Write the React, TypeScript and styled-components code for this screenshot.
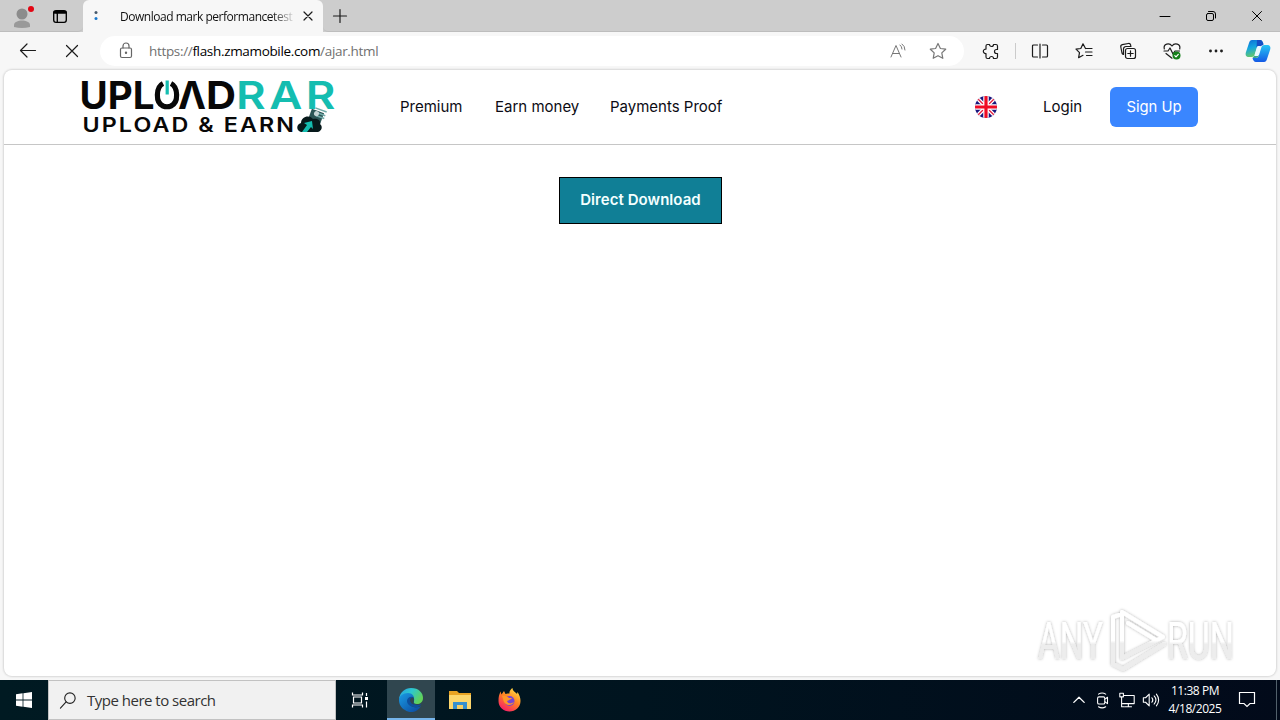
import React from 'react'
import styled, { createGlobalStyle } from 'styled-components'

const Colors = {
  titleBar: '#cdcdcd',
  toolbar: '#f7f7f7',
  teal: '#14bdb0',
  ink: '#080808',
  blue: '#3a86ff',
  download: '#107f96',
  taskbar: '#00141f',
}

const uiFont = `'Open Sans', 'Noto Sans', sans-serif`
const siteFont = `Inter, 'Liberation Sans', sans-serif`

const GlobalStyle = createGlobalStyle`
  * {
    box-sizing: border-box;
  }
  body {
    margin: 0;
    overflow: hidden;
    font-family: ${uiFont};
  }
  svg {
    display: block;
    flex-shrink: 0;
    overflow: visible;
  }
`

const Screen = styled.div`
  display: flex;
  flex-direction: column;
  width: 1280px;
  height: 720px;
  background-color: ${Colors.toolbar};
`

const Slot = styled.div<{ $width: number }>`
  display: flex;
  flex: none;
  align-items: center;
  justify-content: center;
  width: ${({ $width }) => $width}px;
`

const Spacer = styled.div`
  flex: 1;
`

/* browser */

const TitleBar = styled.header`
  display: flex;
  height: 32px;
  background-color: ${Colors.titleBar};
`

const TitleTools = styled.div`
  display: flex;
  width: 83px;
  height: 32px;
  border-bottom: 1px solid #bdbdbd;
  border-bottom-right-radius: 5px;
`

const Tab = styled.div`
  display: flex;
  align-items: center;
  width: 240px;
  padding-left: 10px;
  border-radius: 6px 6px 0 0;
  background-color: ${Colors.toolbar};
`

const TabTitle = styled.span`
  width: 176px;
  margin-left: 21px;
  overflow: hidden;
  white-space: nowrap;
  font-size: 12px;
  letter-spacing: -0.47px;
  color: #111;
  mask-image: linear-gradient(90deg, #000 152px, transparent 176px);
`

const WindowBar = styled.div`
  display: flex;
  flex: 1;
  border-bottom: 1px solid #bdbdbd;
  border-bottom-left-radius: 5px;
`

const Toolbar = styled.div`
  display: flex;
  align-items: center;
  height: 38px;
  padding-left: 6px;
`

const AddressBar = styled.div`
  display: flex;
  align-items: center;
  width: 864px;
  height: 30px;
  margin: 0 5px 0 6px;
  padding: 0 6px 0 16px;
  border-radius: 15px;
  background-color: #fff;
`

const Url = styled.span`
  flex: 1;
  margin-left: 13px;
  font-size: 13.5px;
  letter-spacing: -0.33px;
  color: #707070;

  b {
    font-weight: 400;
    color: #000;
  }
`

const Divider = styled.div`
  width: 1px;
  height: 16px;
  margin: 0 2px;
  background-color: #cbcbcb;
`

const Page = styled.main`
  display: flex;
  flex-direction: column;
  width: 1272px;
  height: 606px;
  margin: 0 4px 4px;
  border-radius: 8px;
  overflow: hidden;
  background-color: #fff;
  box-shadow: 0 0 2px 1px rgba(0, 0, 0, 0.13);
`

/* site */

const SiteHeader = styled.div`
  display: flex;
  flex: none;
  align-items: center;
  height: 75px;
  padding: 0 78px;
  border-bottom: 1px solid #c6c6c6;
`

const SiteNav = styled.nav`
  display: flex;
  gap: 32px;
  margin-left: 62px;
`

const NavLink = styled.a<{ $width: number }>`
  width: ${({ $width }) => $width}px;
  white-space: nowrap;
  font-family: ${siteFont};
  font-size: 15px;
  line-height: 24px;
  color: #0c0c14;
`

const SignUp = styled.button`
  width: 88px;
  height: 40px;
  margin-left: 28px;
  padding: 0 0 1px;
  border: none;
  border-radius: 6px;
  background-color: ${Colors.blue};
  font-family: ${siteFont};
  font-size: 14.8px;
  color: #fff;
`

const PageBody = styled.div`
  display: flex;
  flex: 1;
  flex-direction: column;
  align-items: center;
  padding: 32px 39px 2px 0;
`

const DownloadButton = styled.button`
  width: 163px;
  height: 47px;
  margin-left: 40px;
  padding: 0 0 2px;
  border: 1px solid #000;
  background-color: ${Colors.download};
  font-family: ${siteFont};
  font-size: 15px;
  font-weight: 600;
  letter-spacing: 0.05px;
  color: #f4ffff;
`

const Watermark = styled.div`
  align-self: flex-end;
  margin-top: auto;
`

/* taskbar */

const Taskbar = styled.footer`
  display: flex;
  height: 40px;
  background-color: ${Colors.taskbar};
  background-image: linear-gradient(90deg, #001a22, #00141f 50%, #020a1a);
`

const SearchBox = styled.div`
  display: flex;
  align-items: center;
  width: 288px;
  border: 1px solid #c2c2c2;
  padding-left: 10px;
  background-color: #f1f1f1;
  font-size: 15px;
  letter-spacing: -0.5px;
  color: #333;

  span {
    margin-left: 9px;
  }
`

const TaskButton = styled.div<{ $active?: boolean }>`
  display: flex;
  align-items: center;
  justify-content: center;
  width: 48px;
  height: 40px;
  margin-right: 1px;
  background-color: ${({ $active }) => ($active ? '#30464f' : 'transparent')};
  box-shadow: ${({ $active }) => ($active ? 'inset 0 -2px 0 #76b5eb' : 'none')};
`

const Clock = styled.div`
  width: 64px;
  padding-top: 2px;
  text-align: center;
  font-size: 12px;
  line-height: 18px;
  letter-spacing: -0.45px;
  color: #fff;
`

const ShowDesktop = styled.div`
  width: 4px;
  border-left: 1px solid #52606b;
`

type IconProps = {
  size?: number
  color?: string
  stroke?: number
  children: React.ReactNode
}

const Icon = ({ size = 20, color = '#1b1b1b', stroke = 1.2, children }: IconProps) => (
  <svg
    width={size}
    height={size}
    viewBox="0 0 20 20"
    fill="none"
    stroke={color}
    strokeWidth={stroke}
    strokeLinecap="round"
    strokeLinejoin="round"
  >
    {children}
  </svg>
)

const Logo = () => (
  <svg width="256" height="58" viewBox="82 79 256 58" fontFamily="Inter, 'Liberation Sans', sans-serif">
    <g fontSize="38.5" fontWeight="700" fill={Colors.ink}>
      <text x="79.500" y="110" textLength="75" lengthAdjust="spacingAndGlyphs">
        UPL
      </text>
      <text x="178" y="110" textLength="28" lengthAdjust="spacingAndGlyphs">
        Λ
      </text>
      <text x="206" y="110" textLength="30" lengthAdjust="spacingAndGlyphs">
        D
      </text>
      <text
        x="236"
        y="110"
        fontWeight="600"
        letterSpacing="3"
        textLength="103"
        lengthAdjust="spacingAndGlyphs"
        fill={Colors.teal}
      >
        RAR
      </text>
    </g>
    <path
      d="M163 84.500c-7 3.500-8 19 0 22.500q4 1.500 8 0c8-3.500 7-19 0-22.500"
      fill="none"
      stroke={Colors.ink}
      strokeWidth="5.200"
    />
    <path d="M167.200 81.500v14" stroke={Colors.teal} strokeWidth="3.200" />
    <text
      x="82.500"
      y="132.700"
      fontSize="20"
      fontWeight="600"
      fill={Colors.ink}
      letterSpacing="1.800"
      textLength="213.500"
      lengthAdjust="spacingAndGlyphs"
    >
      UPLOAD &amp; EARN
    </text>
    <g transform="rotate(20 317 119)">
      <path d="M309 112h13v13h-13z" fill="#2b5555" />
      <path d="M312 110h12M314 114h10M315 117h9" stroke="#71aaa8" strokeWidth="1.500" />
      <circle cx="315" cy="115" r="2.500" fill="#c5d5d5" />
    </g>
    <path
      d="M301 133c-5-1-5-8 0-9 0-6 8-9 12-4 5-1 8 2 7 5 3 2 2 7-2 8z"
      fill="#07191b"
    />
    <path d="M304 124l8-2 1 8-2-2-4 5h-5l5-7z" fill={Colors.teal} />
  </svg>
)

const Flag = () => (
  <svg width="22" height="22" viewBox="0 0 22 22">
    <clipPath id="flag">
      <circle cx="11" cy="11" r="11" />
    </clipPath>
    <g clipPath="url(#flag)">
      <path d="M0 0h22v22H0z" fill="#18147c" />
      <path d="M1 1l20 20M21 1L1 21" stroke="#fff" strokeWidth="4" />
      <path d="M1 1l20 20M21 1L1 21" stroke="#e51b3a" strokeWidth="1.300" />
      <path d="M11 0v22M0 11h22" stroke="#fff" strokeWidth="5.500" />
      <path d="M11 0v22M0 11h22" stroke="#ef0b24" strokeWidth="3.200" />
    </g>
  </svg>
)

const AnyRun = () => (
  <svg width="202" height="66" viewBox="1034 608 202 66">
    <defs>
      <linearGradient id="markFill" x1="0" y1="0" x2="0" y2="1">
        <stop offset="0.500" stopColor="#fff" />
        <stop offset="0.550" stopColor="#ededed" />
      </linearGradient>
      <filter id="markShadow" x="-10%" y="-10%" width="120%" height="120%">
        <feDropShadow dx="0" dy="0" stdDeviation="1.500" floodColor="#000" floodOpacity="0.320" />
      </filter>
    </defs>
    <g filter="url(#markShadow)">
      <g fontFamily="Roboto, sans-serif" fontSize="51" fill="url(#markFill)">
        <text x="1037" y="659" textLength="65" lengthAdjust="spacingAndGlyphs">
          ANY
        </text>
        <text x="1166" y="659" textLength="67" lengthAdjust="spacingAndGlyphs">
          RUN
        </text>
      </g>
      <path
        d="M1121 612l41 25M1121 612v46l41-21M1112 617v47l10 5 41-25M1112 617l6-2M1127 623l28 17"
        fill="none"
        stroke="url(#markFill)"
        strokeWidth="4"
        strokeLinecap="round"
        strokeLinejoin="round"
      />
    </g>
  </svg>
)

const Copilot = () => (
  <svg width="26" height="24" viewBox="0 0 26 24">
    <defs>
      <linearGradient id="cpLeft" x1="0" y1="0" x2="0.300" y2="1">
        <stop stopColor="#0c6bd6" />
        <stop offset="0.500" stopColor="#14a6df" />
        <stop offset="1" stopColor="#65c86b" />
      </linearGradient>
      <linearGradient id="cpRight" x1="0" y1="0" x2="0" y2="1">
        <stop stopColor="#26c6f4" />
        <stop offset="1" stopColor="#1459e5" />
      </linearGradient>
    </defs>
    <path
      d="M7 1h8c2 0 3 2 3.500 4h-3c-2 0-3 1-3.500 3L9.500 16c-.5 1-1 2-3 2H4c-3 0-4-2-3-5L4 4c.5-2 1.500-3 3-3z"
      fill="url(#cpLeft)"
    />
    <path
      d="M19 23h-8c-2 0-3-2-3.500-4h3c2 0 3-1 3.500-3L16.500 8c.5-1 1-2 3-2H22c3 0 4 2 3 5l-3 9c-.5 2-1.500 3-3 3z"
      fill="url(#cpRight)"
    />
    <path d="M12 1h3c2 0 3 2 3.500 5-2 0-2.500 1-3 2h-4z" fill="#154ec5" />
    <path d="M7.500 19l2.500-3h4c-.5 2-1.500 3-3.500 3z" fill="#3ba98b" />
    <path d="M12.500 7H16l-2.800 10H9.500z" fill="#e8f9ff" />
  </svg>
)

const Edge = () => (
  <svg width="24" height="24" viewBox="0 0 24 24">
    <defs>
      <linearGradient id="edgeTop" x1="0" y1="0" x2="1" y2="0.500">
        <stop stopColor="#269be4" />
        <stop offset="0.500" stopColor="#2dc8cf" />
        <stop offset="1" stopColor="#61d259" />
      </linearGradient>
      <linearGradient id="edgeSide" x1="0" y1="0" x2="1" y2="1">
        <stop stopColor="#1a9be4" />
        <stop offset="1" stopColor="#0b469c" />
      </linearGradient>
    </defs>
    <path d="M0 11C1 4 6 0 12 0c8 0 12 5 12 10 0 4-3 6-6 6-3 0-4-1-3-3 1-4-2-6-6-6-4 0-7 1-9 4z" fill="url(#edgeTop)" />
    <path d="M0 12c0-4 4-7 9-7 4 0 6 3 6 5-4-1-6 2-5 5 1 4 7 6 12 3-3 6-11 8-16 4-4-2-6-6-6-10z" fill="url(#edgeSide)" />
    <path d="M8 13c0-3 3-5 6-4 1 1 1.500 3 .5 5 0 3 5 4 8 2-2 3-5 4-8 3-4-1-6.500-3-6.500-6z" fill="#0d4f9e" />
    <path d="M11 12c0-1.500 1.500-2.500 3.200-2.500.8 1 .8 3 .3 4.500-.5 1 .5 2 1.500 2.500-3 0-5-2-5-4.500z" fill="#30464f" />
  </svg>
)

const Explorer = () => (
  <svg width="22" height="19" viewBox="0 0 22 19">
    <path d="M0 0h8l2 2h12v16H0z" fill="#e8a323" />
    <path d="M0 4h22v14H0z" fill="#fcd66c" />
    <path d="M4 18v-7h14v7h-4v-4H8v4z" fill="#368fce" />
    <path d="M8 14h6v4H8z" fill="#f5cf65" />
  </svg>
)

const Firefox = () => (
  <svg width="23" height="24" viewBox="0 0 23 24">
    <defs>
      <linearGradient id="fox" x1="0.800" y1="0" x2="0.200" y2="1">
        <stop stopColor="#ffe348" />
        <stop offset="0.450" stopColor="#ff8522" />
        <stop offset="1" stopColor="#f5156c" />
      </linearGradient>
    </defs>
    <path
      d="M2.500 3.500l1 3L6 3l1.500 3c1.500-.5 3-.5 4-.5C11 3 13 1 14.500 0c0 3 3 4 4.500 6l.5-2c2 3 3 6 3 9 0 6-5 10.500-11 10.500S.5 19 .5 13c0-4 .5-6 2-9.500z"
      fill="url(#fox)"
    />
    <circle cx="11.500" cy="13" r="5" fill="#7545d4" />
    <path d="M4 8c2-1 5 0 7 2h3c-1 2-4 2-5 3 1 3 4 3 7 1-2 4-8 4-10 0-1-2-1-4-2-6z" fill="#ff9728" />
  </svg>
)

const Browser = () => (
  <>
    <TitleBar>
      <TitleTools>
        <Slot $width={44}>
          <svg width="24" height="26" viewBox="10 2 24 26">
            <circle cx="22" cy="13" r="5.500" fill="#8c8c8c" />
            <path d="M14 26v-2c0-6 16-6 16 0v2q-8 2-16 0z" fill="#999" />
            <circle cx="31" cy="8" r="3" fill="#e30613" />
          </svg>
        </Slot>
        <Slot $width={32}>
          <Icon size={18} stroke={1.5} color="#000">
            <rect x="3" y="4" width="14" height="13" rx="2.500" />
            <path d="M4 6h12" strokeWidth="3" />
            <path d="M7 7v9.500" />
          </Icon>
        </Slot>
      </TitleTools>
      <Tab>
        <svg width="6" height="12" viewBox="0 0 6 12">
          <circle cx="3" cy="2.500" r="1.500" fill="#47596b" />
          <circle cx="3" cy="8.500" r="1.500" fill="#1877cc" />
        </svg>
        <TabTitle>Download mark performancetest</TabTitle>
        <Slot $width={24}>
          <Icon size={16} stroke={1.5}>
            <path d="M5 5l10 10M15 5L5 15" />
          </Icon>
        </Slot>
      </Tab>
      <WindowBar>
        <Slot $width={34}>
          <Icon>
            <path d="M3.500 10h13M10 3.500v13" />
          </Icon>
        </Slot>
        <Spacer />
        <Slot $width={46}>
          <Icon color="#000">
            <path d="M5 10.500h10" strokeWidth="1" />
          </Icon>
        </Slot>
        <Slot $width={46}>
          <Icon color="#000" stroke={1}>
            <rect x="5.500" y="7.500" width="7" height="7" rx="1.500" />
            <path d="M7.500 5.500h4.500q2.500 0 2.500 2.500v4" />
          </Icon>
        </Slot>
        <Slot $width={46}>
          <Icon color="#000" stroke={1}>
            <path d="M5.500 5.500l9 9M14.500 5.500l-9 9" />
          </Icon>
        </Slot>
      </WindowBar>
    </TitleBar>
    <Toolbar>
      <Slot $width={44}>
        <Icon>
          <path d="M17.500 9.500h-15M9 3L2.500 9.500 9 16" />
        </Icon>
      </Slot>
      <Slot $width={44}>
        <Icon>
          <path d="M4.500 4.500l11 11M15.500 4.500l-11 11" />
        </Icon>
      </Slot>
      <AddressBar>
        <Icon color="#666">
          <rect x="4.500" y="7" width="11" height="9.500" rx="1.500" />
          <path d="M7 7V5a3 3 0 0 1 6 0v2" />
          <circle cx="10" cy="11.700" r=".6" fill="#666" />
        </Icon>
        <Url>
          https://<b>flash.zmamobile.com</b>/ajar.html
        </Url>
        <Slot $width={40}>
          <Icon color="#777" stroke={1}>
            <path d="M3 16L8 4.500 13 16M4.500 12.500h7M12 4q2 1.500 2 4M14 3q3 2 3 6" />
          </Icon>
        </Slot>
        <Slot $width={40}>
          <Icon color="#777">
            <path d="M10 2.500l2.400 5 5.300.7-3.900 3.700 1 5.400L10 14.700l-4.800 2.600 1-5.400-3.900-3.700 5.300-.7z" />
          </Icon>
        </Slot>
      </AddressBar>
      <Slot $width={44}>
        <Icon>
          <path d="M6.500 3.500h2a2 2 0 0 0 4 0H15a1.500 1.500 0 0 1 1.500 1.500v3.500h-1a2 2 0 0 0 0 4h1V16a1.500 1.500 0 0 1-1.500 1.500h-2.500a2 2 0 0 0-4 0h-2A1.500 1.500 0 0 1 5 16v-3.500a2.200 2.200 0 1 1 0-4.300V5a1.500 1.500 0 0 1 1.500-1.500z" />
        </Icon>
      </Slot>
      <Divider />
      <Slot $width={44}>
        <Icon>
          <path d="M7.500 4h-4A1 1 0 0 0 2.500 5v10a1 1 0 0 0 1 1h4M12.500 4h4a1 1 0 0 1 1 1v10a1 1 0 0 1-1 1h-4M10 3v14" />
        </Icon>
      </Slot>
      <Slot $width={44}>
        <Icon>
          <path d="M11.500 7.500L9 2.800 6.800 7.500 2 8.200l3.500 3.500-.9 5 4.400-2.400M11.500 7.500H18M11.500 11H18M12.500 14.500H18" />
        </Icon>
      </Slot>
      <Slot $width={44}>
        <Icon>
          <rect x="7.500" y="7.500" width="10" height="10" rx="2" />
          <path d="M12.500 9.800v5.400M9.800 12.500h5.400M5.500 13.500A2 2 0 0 1 4 12L2.800 6a2 2 0 0 1 1.500-2.300l6-1.200a2 2 0 0 1 2.300 1.500l.3 1.500H8a2.500 2.500 0 0 0-2.500 2.500z" />
        </Icon>
      </Slot>
      <Slot $width={44}>
        <Icon>
          <path d="M2.300 8C1 2.500 7.500 1.500 10 5c2.500-3.500 9-2.500 7.700 3M2 10h4l2-3 3 6 2-3h4.500M4 12.500l6 4.700" />
          <circle cx="14.500" cy="14.500" r="4" fill="#16801b" stroke="none" />
          <path d="M12.800 14.700l1.200 1.200 2.300-2.500" stroke="#fff" />
        </Icon>
      </Slot>
      <Slot $width={44}>
        <Icon>
          <circle cx="4.500" cy="10" r=".8" fill="#1b1b1b" />
          <circle cx="10" cy="10" r=".8" fill="#1b1b1b" />
          <circle cx="15.500" cy="10" r=".8" fill="#1b1b1b" />
        </Icon>
      </Slot>
      <Slot $width={40}>
        <Copilot />
      </Slot>
    </Toolbar>
  </>
)

const WindowsTaskbar = () => (
  <Taskbar>
    <Slot $width={48}>
      <svg width="16" height="16" viewBox="0 0 16 16" fill="#fff">
        <path d="M0 2.200l6.600-.9v6.300H0zM7.400 1.200L16 0v7.600H7.400zM0 8.400h6.600v6.300L0 13.800zM7.400 8.400H16V16l-8.600-1.200z" />
      </svg>
    </Slot>
    <SearchBox>
      <Icon size={19} color="#222">
        <circle cx="11.500" cy="7.500" r="5.500" />
        <path d="M7.500 11.500L1.500 18" />
      </Icon>
      <span>Type here to search</span>
    </SearchBox>
    <Slot $width={48}>
      <svg width="18" height="18" viewBox="0 0 18 18" fill="none" stroke="#fff" strokeWidth="1.200">
        <path d="M1.500 1.500v2.500h10V1.500M1.500 16.500v-2.500h10v2.500M2.500 6h8v6h-8zM15.500 2v3M15.500 10.500v6" />
        <path d="M14 6h3v3h-3z" fill="#fff" stroke="none" />
      </svg>
    </Slot>
    <Slot $width={3} />
    <TaskButton $active>
      <Edge />
    </TaskButton>
    <TaskButton>
      <Explorer />
    </TaskButton>
    <TaskButton>
      <Firefox />
    </TaskButton>
    <Spacer />
    <Slot $width={24}>
      <Icon color="#fff" size={16} stroke={1.6}>
        <path d="M3.500 13L10 6.500l6.500 6.500" />
      </Icon>
    </Slot>
    <Slot $width={24}>
      <Icon color="#fff" size={18}>
        <rect x="4" y="6.500" width="8" height="8" rx="1.500" />
        <path d="M12 9l3-2v7l-3-2M5 3.500q4-2.500 8 0M5 17.500q4 2.500 8 0" />
      </Icon>
    </Slot>
    <Slot $width={24}>
      <Icon color="#fff" size={18}>
        <path d="M6 5h12v9H5M11.500 14v3M8 17.500h7M2 2.500h4v4H2zM4 6.500v11h3" />
      </Icon>
    </Slot>
    <Slot $width={24}>
      <Icon color="#fff" size={18}>
        <path d="M1.500 7.500v5H4l4 4v-13l-4 4zM11 7.500q2 2.500 0 5M13.500 5.500q4 4.500 0 9M16 3.500q5 6.500 0 13" />
      </Icon>
    </Slot>
    <Clock>
      <div>11:38 PM</div>
      <div>4/18/2025</div>
    </Clock>
    <Slot $width={40}>
      <svg width="18" height="18" viewBox="0 0 18 18" fill="none" stroke="#fff" strokeWidth="1.200">
        <path d="M1.500 1.500h15v11H12l-3 3-3-3H1.500z" />
      </svg>
    </Slot>
    <Slot $width={9} />
    <ShowDesktop />
  </Taskbar>
)

const App: React.FC = () => (
  <Screen>
    <GlobalStyle />
    <Browser />
    <Page>
      <SiteHeader>
        <Logo />
        <SiteNav>
          <NavLink $width={63}>Premium</NavLink>
          <NavLink $width={83}>Earn money</NavLink>
          <NavLink $width={112}>Payments Proof</NavLink>
        </SiteNav>
        <Spacer />
        <Flag />
        <Slot $width={46} />
        <NavLink $width={39}>Login</NavLink>
        <SignUp>Sign Up</SignUp>
      </SiteHeader>
      <PageBody>
        <DownloadButton>Direct Download</DownloadButton>
        <Watermark>
          <AnyRun />
        </Watermark>
      </PageBody>
    </Page>
    <WindowsTaskbar />
  </Screen>
)

export default App
